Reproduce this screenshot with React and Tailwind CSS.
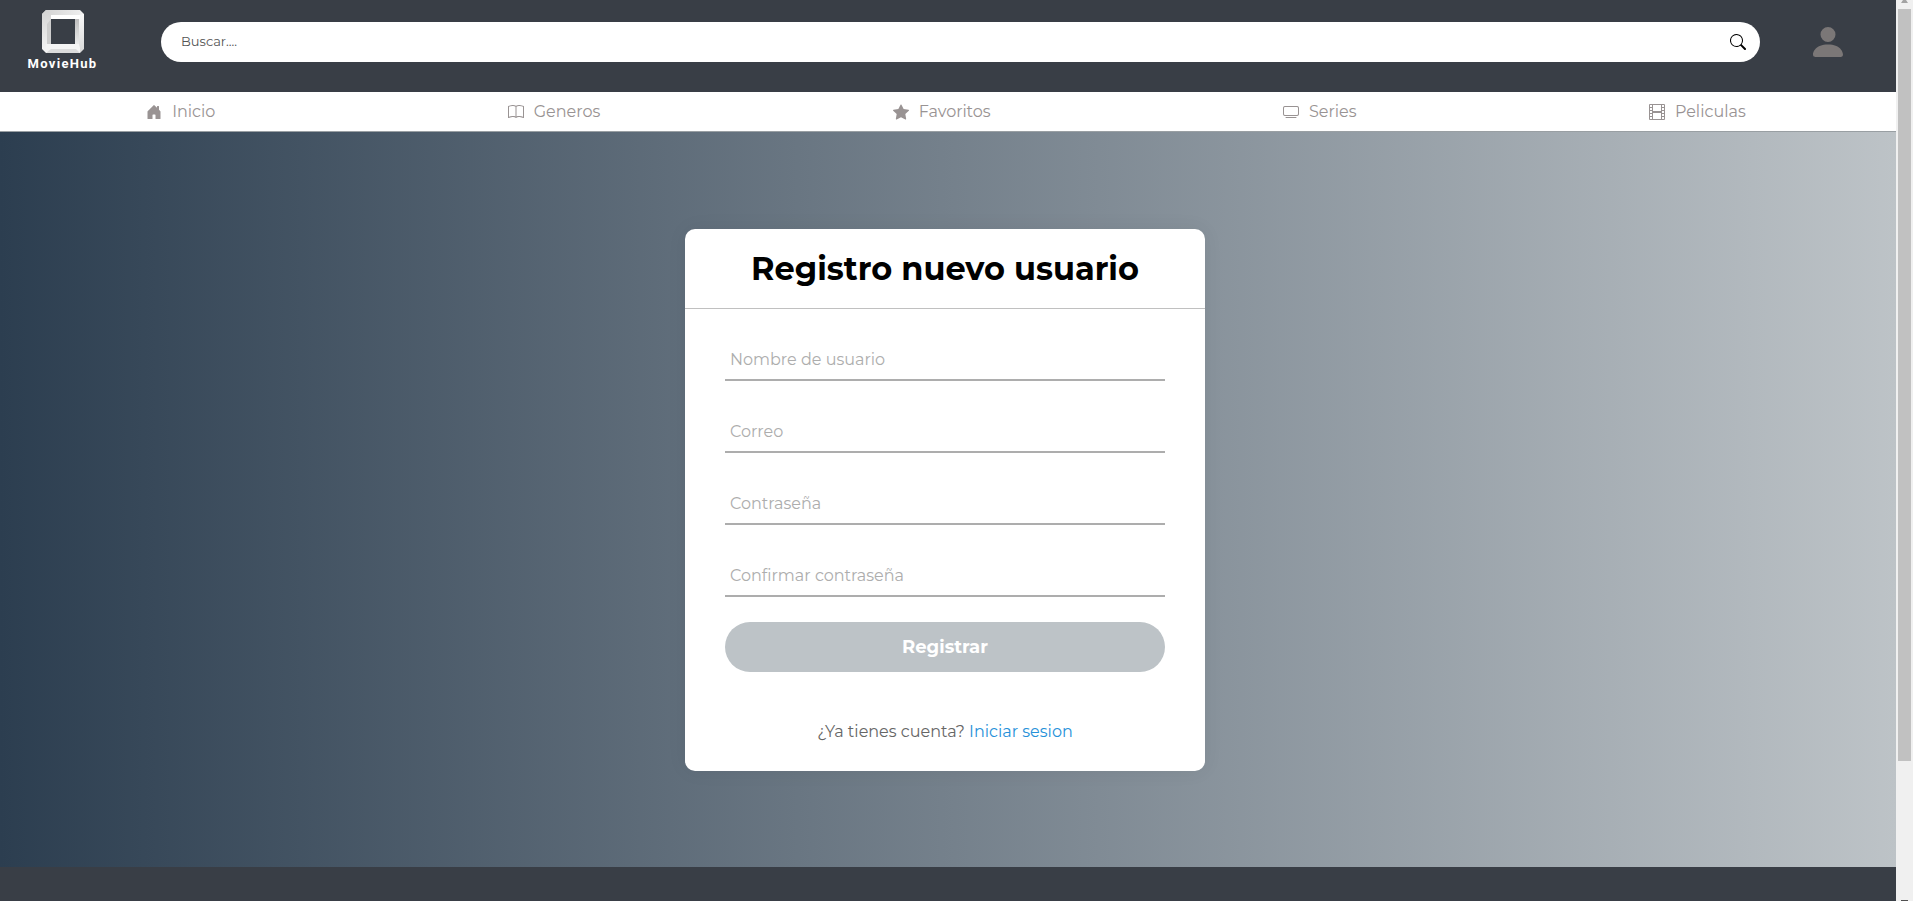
import { BsHouseDoorFill, BsBook, BsStarFill, BsTv, BsFilm, BsSearch, BsPersonFill } from 'react-icons/bs';

const links = [
  { label: 'Inicio', Icon: BsHouseDoorFill },
  { label: 'Generos', Icon: BsBook },
  { label: 'Favoritos', Icon: BsStarFill },
  { label: 'Series', Icon: BsTv },
  { label: 'Peliculas', Icon: BsFilm },
];

const fields = [
  { id: 'usuario', label: 'Nombre de usuario', type: 'text' },
  { id: 'correo', label: 'Correo', type: 'email' },
  { id: 'clave', label: 'Contraseña', type: 'password' },
  { id: 'confirmar', label: 'Confirmar contraseña', type: 'password' },
];

function Logo() {
  return (
    <a href="#" className="flex w-[125px] flex-col items-center pt-[10px]">
      <svg width="42" height="43" viewBox="0 0 42 43" aria-hidden="true">
        <defs>
          <linearGradient id="top" x1="0" y1="0" x2="1" y2="0">
            <stop offset="0" stopColor="#d2d2d2" />
            <stop offset="1" stopColor="#f0f0f0" />
          </linearGradient>
          <linearGradient id="left" x1="0" y1="0" x2="0" y2="1">
            <stop offset="0" stopColor="#d4d4d4" />
            <stop offset="1" stopColor="#f6f6f6" />
          </linearGradient>
          <linearGradient id="right" x1="0" y1="0" x2="0" y2="1">
            <stop offset="0" stopColor="#f8f8f8" />
            <stop offset="1" stopColor="#d8d8d8" />
          </linearGradient>
          <linearGradient id="inner" x1="0" y1="0" x2="0" y2="1">
            <stop offset="0" stopColor="#bdbdbd" />
            <stop offset="1" stopColor="#ededed" />
          </linearGradient>
        </defs>
        <path fill="url(#top)" d="M4 0H38L42 4V9H0V4Z" />
        <path fill="url(#left)" d="M0 4L4 0L9 5V34H5V43H4L0 39Z" />
        <path fill="url(#right)" d="M37 5L42 4V39L38 43L37 38Z" />
        <path fill="#fff" d="M9 5H38V9H9Z" />
        <path fill="url(#inner)" d="M33 9H37V35H33Z" />
        <path fill="#cdcdcd" d="M5 14L9 9V34H5Z" />
        <path fill="#f4f4f4" d="M4 34H37L38 38V43H4Z" />
        <path fill="#dcdcdc" d="M4 43L9 39H34L38 43Z" />
      </svg>
      <span className="mt-[3px] font-['Roboto',sans-serif] text-[13px] leading-[16px] font-bold tracking-widest text-white">MovieHub</span>
    </a>
  );
}

function Scrollbar() {
  return (
    <div aria-hidden="true" className="flex h-screen w-[17px] shrink-0 flex-col items-center justify-between bg-[#f0f0f0]">
      <svg width="7" height="3" viewBox="0 0 7 3"><path fill="#a3a3a3" d="M2 0H5L7 3H0Z" /></svg>
      <div className="mt-[6px] mb-[139px] w-[13px] flex-1 bg-[#c1c1c1]" />
      <svg width="7" height="1" viewBox="0 0 7 1"><path fill="#505050" d="M0 0H7V1H0Z" /></svg>
    </div>
  );
}

export default function App() {
  return (
    <div className="flex min-h-screen font-['Montserrat','Inter',sans-serif]">
      <div className="flex min-w-0 flex-1 flex-col">
        <header className="flex h-[92px] bg-[#393e46]">
          <Logo />
          <form className="mt-[22px] ml-9 flex h-10 flex-1 items-center rounded-full bg-white pr-[14px] pl-5" onSubmit={(e) => e.preventDefault()}>
            <input type="search" aria-label="Buscar" placeholder="Buscar...." className="min-w-0 flex-1 text-[13px] outline-none placeholder:text-[#555]" />
            <button type="submit" aria-label="Buscar" className="text-black"><BsSearch size={16} /></button>
          </form>
          <button type="button" aria-label="Perfil" className="mt-[22px] mr-12 ml-12 h-10 text-[#7b7777]"><BsPersonFill size={40} /></button>
        </header>

        <nav className="flex h-10 items-center justify-around border-b border-[#999fa3] bg-white pr-1">
          {links.map(({ label, Icon }) => (
            <a key={label} href="#" className="flex items-center gap-[10px] text-[16px] text-[#999393]">
              <Icon size={16} />
              {label}
            </a>
          ))}
        </nav>

        <main className="flex justify-center bg-linear-to-r/srgb from-[#2c3e50] to-[#bdc3c7] pt-[97px] pb-24 pr-[6px]">
          <section className="w-[520px] rounded-[10px] bg-white shadow-[0_0_20px_rgba(0,0,0,0.06)]">
            <h1 className="border-b border-[#c0c0c0] text-center text-[32px] leading-[79px] font-bold text-black">Registro nuevo usuario</h1>
            <form className="px-10" onSubmit={(e) => e.preventDefault()}>
              <div className="flex flex-col gap-8 pt-8">
                {fields.map(({ id, label, type }) => (
                  <div key={id} className="relative h-10 border-b-2 border-[#adadad]">
                    <input id={id} type={type} placeholder=" " className="peer h-full w-full px-[5px] text-[16px] outline-none" />
                    <label htmlFor={id} className="pointer-events-none absolute inset-y-0 left-[5px] flex items-center text-[16px] text-[#adadad] peer-[:not(:placeholder-shown)]:hidden">{label}</label>
                  </div>
                ))}
              </div>
              <button type="submit" className="mt-[25px] h-[50px] w-full rounded-full bg-[#bdc3c7] text-[18px] font-bold text-white">Registrar</button>
              <p className="mt-[48px] pb-[27px] text-center text-[16px] leading-6 text-[#666]">
                ¿Ya tienes cuenta? <a href="#" className="text-[#2691d9]">Iniciar sesion</a>
              </p>
            </form>
          </section>
        </main>

        <footer className="flex-1 bg-[#393e46]" />
      </div>
      <Scrollbar />
    </div>
  );
}
